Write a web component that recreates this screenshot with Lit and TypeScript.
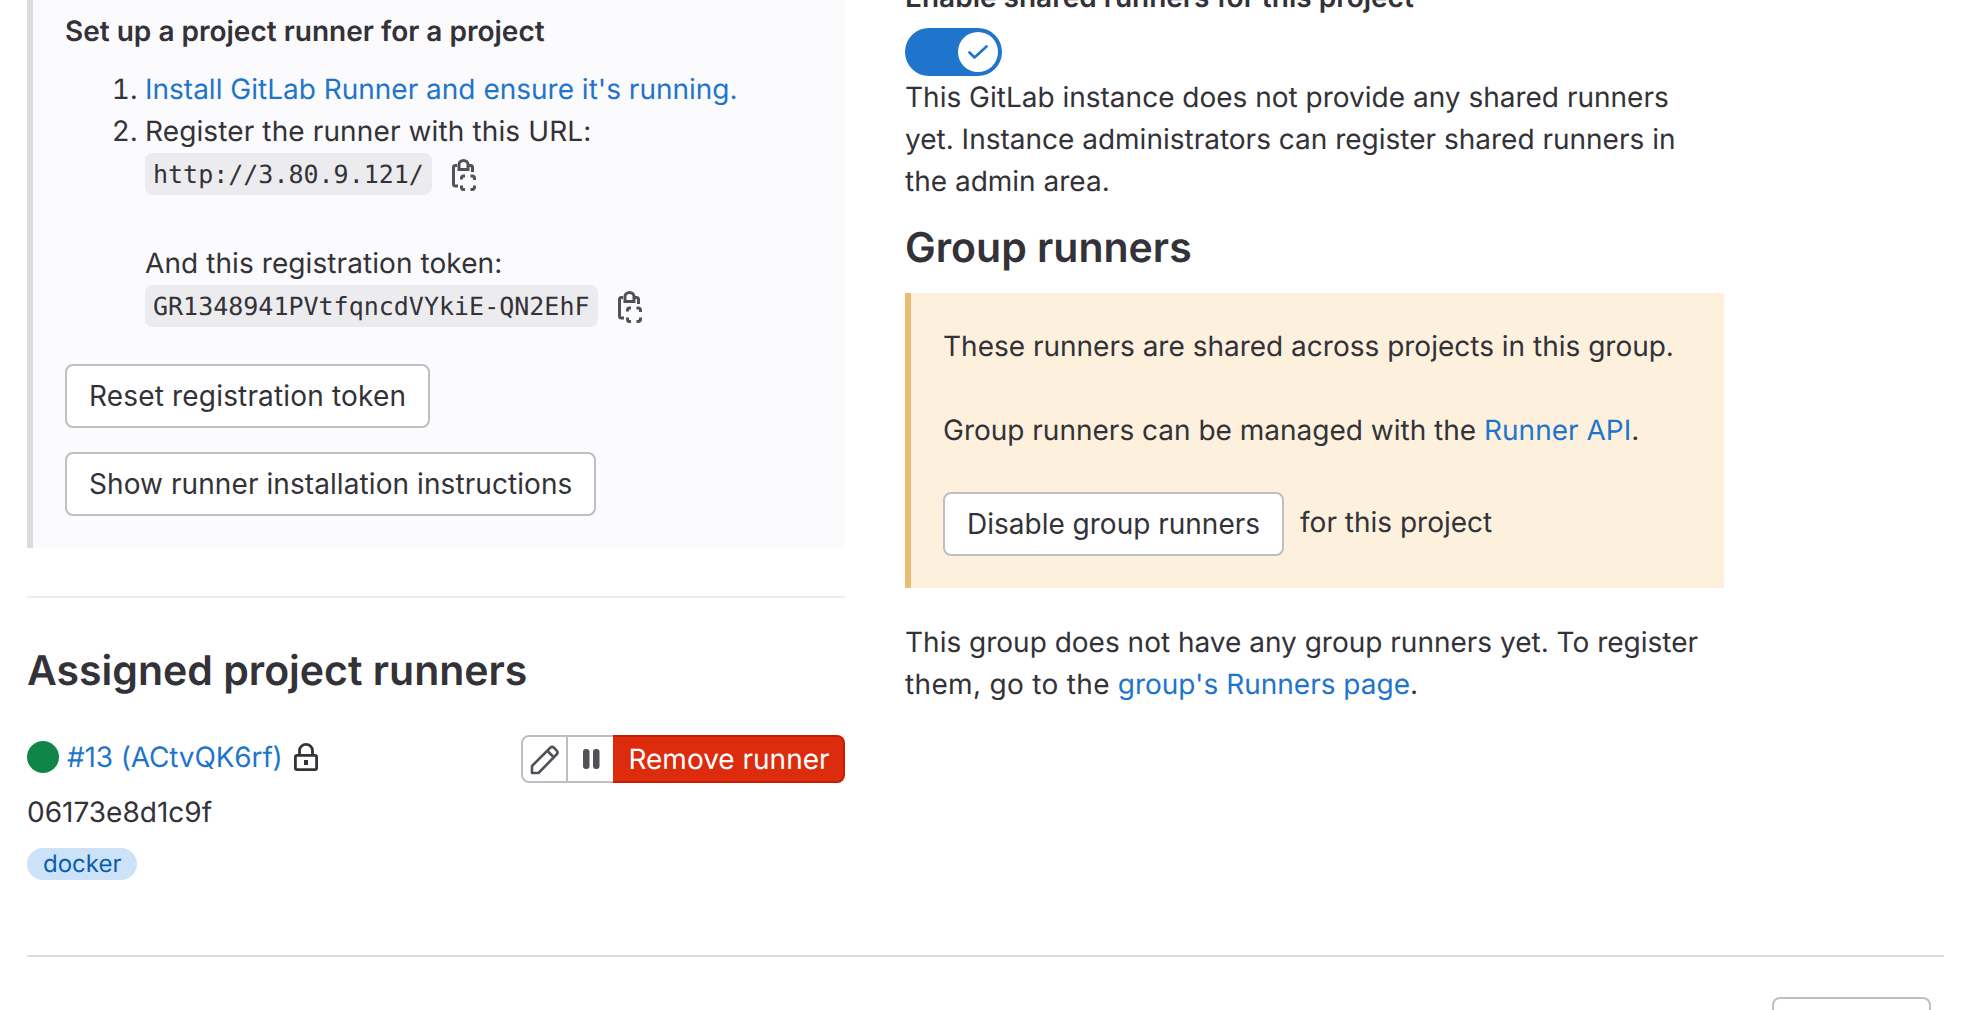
import {css, html, LitElement} from 'lit';
import {customElement} from 'lit/decorators.js';

const clipboardIcon = html`
    <svg class="clip" viewBox="0 0 24 32" width="24" height="32" fill="none" stroke="#535158" stroke-width="3">
        <path d="M5 6.5H3.5a2 2 0 0 0-2 2v16.5a2 2 0 0 0 2 2H6"/>
        <path d="M17 6.5h1.5a2 2 0 0 1 2 2V13"/>
        <path d="M7 10.5h9V5.5a4.5 4 0 0 0-9 0z"/>
        <path d="M9.5 20.5V19a2 2 0 0 1 2-2h1.5"/>
        <path d="M18.5 17H20a2.5 2.5 0 0 1 2.5 2.5v1.5"/>
        <path d="M22.5 26.5V28a2.5 2.5 0 0 1-2.5 2.5h-1.5"/>
        <path d="M13 30.5h-1.5a2 2 0 0 1-2-2v-2"/>
    </svg>
`;

@customElement("app-root")
export default class AppRoot extends LitElement {
    static styles = css`
        :host {
            display: block;
            height: 1010px;
            overflow: hidden;
            background: #fff;
            color: #333238;
            font-family: Inter, "Noto Sans", sans-serif;
            font-size: 28px;
            line-height: 42px;
            text-rendering: geometricPrecision;
        }

        a { color: #1f75cb; text-decoration: none; }
        p { margin: 0; }

        /* a few strings run slightly wider in the reference font */
        .track-s { letter-spacing: 0.08px; }
        .track-m { letter-spacing: 0.12px; }
        .track-l { letter-spacing: 0.17px; }
        .track-xl { letter-spacing: 0.33px; }

        .page { padding: 0 40px 0 27px; }
        .columns {
            display: grid;
            grid-template-columns: 818px 819px;
            column-gap: 60px;
        }

        .callout {
            padding: 10px 32px 32px;
            background: #fbfafd;
            border-left: 6px solid #dcdcde;
        }
        .callout-title { font-weight: 600; }
        .steps { margin: 16px 0 37px; padding-left: 80px; }
        .copy-row {
            display: flex;
            align-items: center;
            gap: 20px;
            margin-top: 1px;
        }
        .token-label { margin-top: 47px; }
        code {
            display: block;
            box-sizing: border-box;
            height: 42px;
            padding: 0 8px;
            background: #ececef;
            border-radius: 8px;
            font-family: "DejaVu Sans Mono", "Liberation Mono", monospace;
            font-size: 25px;
            line-height: 44px;
        }
        .clip { flex: none; position: relative; top: 1px; }

        .btn {
            display: inline-flex;
            box-sizing: border-box;
            height: 64px;
            align-items: center;
            padding: 0 22px;
            background: #fff;
            border: 2px solid #bfbfc3;
            border-radius: 8px;
            color: #333238;
            font: inherit;
        }
        .btn-stack { display: flex; flex-direction: column; align-items: flex-start; gap: 24px; }

        .divider { margin: 48px 0 0; border: 0; border-top: 2px solid #ececef; }
        .section-title {
            margin: 0;
            font-size: 41px;
            line-height: 60px;
            font-weight: 600;
        }
        .assigned { margin-top: 42px; }

        .runner-row {
            display: flex;
            justify-content: space-between;
            margin-top: 35px;
        }
        .runner-name { display: flex; align-items: center; height: 44px; }
        .runner-name a { letter-spacing: -0.15px; }
        .status-dot {
            width: 32px;
            height: 32px;
            margin-right: 8px;
            background: #108548;
            border-radius: 50%;
        }
        .lock { margin-left: 11px; }

        .btn-group { display: flex; height: 48px; }
        .btn-group > * {
            display: flex;
            box-sizing: border-box;
            align-items: center;
            justify-content: center;
        }
        .edit, .pause {
            background: #fff;
            border: solid #bfbfc3;
            border-width: 2px 0;
        }
        .edit {
            width: 47px;
            border-left-width: 2px;
            border-right-width: 2px;
            border-radius: 8px 0 0 8px;
        }
        .pause { width: 45px; }
        .remove {
            width: 232px;
            padding-left: 2px;
            background: #dd2b0e;
            border: 2px solid #c91c00;
            border-left: 0;
            border-radius: 0 8px 8px 0;
            color: #fff;
        }
        .short-sha { margin-top: 8px; }
        .tag {
            display: inline-block;
            margin-top: 15px;
            padding: 0 16px;
            background: #cbe2f9;
            border-radius: 16px;
            color: #0b5cad;
            font-size: 24px;
            line-height: 32px;
            vertical-align: top;
        }
        .tags { display: flex; }

        .enable-label { margin-top: -24px; font-weight: 600; }
        .toggle {
            display: flex;
            box-sizing: border-box;
            width: 97px;
            height: 48px;
            margin-top: 10px;
            padding: 4px;
            justify-content: flex-end;
            background: #1f75cb;
            border-radius: 24px;
        }
        .knob {
            display: flex;
            width: 40px;
            height: 40px;
            align-items: center;
            justify-content: center;
            background: #fff;
            border-radius: 50%;
        }
        .group-title { margin-top: 15px; }

        .warning {
            margin-top: 16px;
            padding: 32px;
            background: #fdf1dd;
            border-left: 6px solid #e9be74;
        }
        .warning-gap { margin-top: 42px; }
        .warning-action { display: flex; gap: 16px; margin-top: 41px; }
        .warning-suffix { margin-top: 9px; }
        .no-runners { margin-top: 33px; }

        .footer-divider {
            margin: 75px 0 0;
            border: 0;
            border-top: 2px solid #dcdcde;
        }
        .footer { display: flex; justify-content: flex-end; margin-top: 40px; padding-right: 13px; }
        .footer .btn { width: 159px; }
    `;

    render() {
        return html`
            <div class="page">
                <div class="columns">
                    <div>
                        <div class="callout">
                            <div class="callout-title">Set up a project runner for a project</div>
                            <ol class="steps">
                                <li><a href="#">Install GitLab Runner and ensure it's running.</a></li>
                                <li>
                                    <span class="track-m">Register the runner with this URL:</span>
                                    <div class="copy-row"><code>http://3.80.9.121/</code>${clipboardIcon}</div>
                                    <div class="token-label track-s">And this registration token:</div>
                                    <div class="copy-row"><code>GR1348941PVtfqncdVYkiE-QN2EhF</code>${clipboardIcon}</div>
                                </li>
                            </ol>
                            <div class="btn-stack">
                                <button class="btn track-l">Reset registration token</button>
                                <button class="btn track-s">Show runner installation instructions</button>
                            </div>
                        </div>
                        <hr class="divider" />
                        <h4 class="section-title assigned">Assigned project runners</h4>
                        <div class="runner-row">
                            <div class="runner-name">
                                <span class="status-dot"></span>
                                <a href="#">#13 (ACtvQK6rf)</a>
                                <svg class="lock" viewBox="0 0 24 28" width="24" height="28" fill="none" stroke="#333238" stroke-width="2.8">
                                    <rect x="1.4" y="12.4" width="21.2" height="14.2" rx="1.6"/>
                                    <path d="M5.5 12V7.5a6.5 6.1 0 0 1 13 0V12"/>
                                    <rect x="10" y="17" width="4" height="5" fill="#333238" stroke="none"/>
                                </svg>
                            </div>
                            <div class="btn-group">
                                <div class="edit">
                                    <svg viewBox="0 0 32 32" width="32" height="32" fill="none" stroke="#535158" stroke-width="2.6" stroke-linejoin="round">
                                        <path d="M3 30v-7L21 5a3 3 0 0 1 4.2 0l2.3 2.3a3 3 0 0 1 0 4.2L9.5 30z"/>
                                        <path d="M18.5 8l5.5 5.5"/>
                                    </svg>
                                </div>
                                <div class="pause">
                                    <svg viewBox="0 0 32 32" width="32" height="32" fill="#535158">
                                        <rect x="8" y="6" width="6.5" height="20" rx="3"/>
                                        <rect x="18" y="6" width="6.5" height="20" rx="3"/>
                                    </svg>
                                </div>
                                <div class="remove">Remove runner</div>
                            </div>
                        </div>
                        <div class="short-sha">06173e8d1c9f</div>
                        <div class="tags"><span class="tag">docker</span></div>
                    </div>
                    <div>
                        <div class="enable-label">Enable shared runners for this project</div>
                        <div class="toggle">
                            <span class="knob">
                                <svg viewBox="0 0 20 14" width="20" height="14" fill="none" stroke="#1f75cb" stroke-width="2.6" stroke-linecap="round" stroke-linejoin="round">
                                    <path d="M1.5 7.5l5 5L18.5 1.5"/>
                                </svg>
                            </span>
                        </div>
                        <p>This GitLab instance does not provide any shared runners yet. Instance administrators can register shared runners in the admin area.</p>
                        <h4 class="section-title group-title">Group runners</h4>
                        <div class="warning">
                            <p>These runners are shared across projects in this group.</p>
                            <p class="warning-gap">Group runners can be managed with the <a href="#">Runner API</a>.</p>
                            <div class="warning-action">
                                <button class="btn">Disable group runners</button>
                                <span class="warning-suffix">for this project</span>
                            </div>
                        </div>
                        <p class="no-runners">This group does not have any group runners yet. To register <span class="track-xl">them, go to the</span> <a href="#">group's Runners page</a>.</p>
                    </div>
                </div>
                <hr class="footer-divider" />
                <div class="footer"><button class="btn"></button></div>
            </div>
        `;
    }
}
